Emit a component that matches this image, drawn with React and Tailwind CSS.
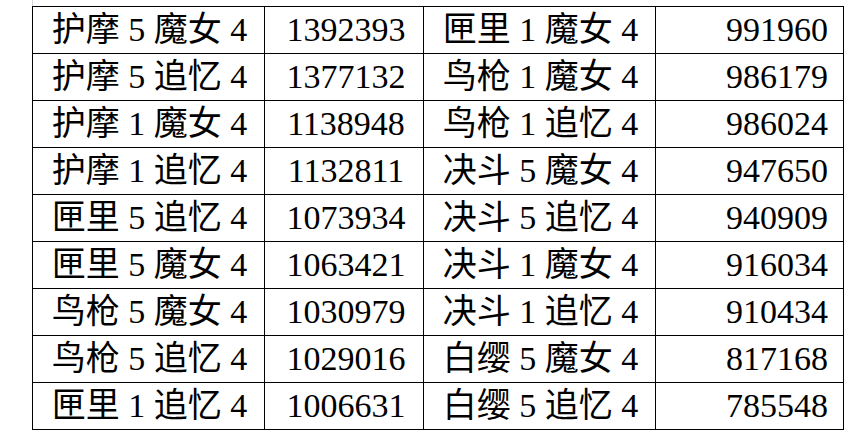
import React from 'react';

const rows = [
  ['护摩 5 魔女 4', '1392393', '匣里 1 魔女 4', '991960'],
  ['护摩 5 追忆 4', '1377132', '鸟枪 1 魔女 4', '986179'],
  ['护摩 1 魔女 4', '1138948', '鸟枪 1 追忆 4', '986024'],
  ['护摩 1 追忆 4', '1132811', '决斗 5 魔女 4', '947650'],
  ['匣里 5 追忆 4', '1073934', '决斗 5 追忆 4', '940909'],
  ['匣里 5 魔女 4', '1063421', '决斗 1 魔女 4', '916034'],
  ['鸟枪 5 魔女 4', '1030979', '决斗 1 追忆 4', '910434'],
  ['鸟枪 5 追忆 4', '1029016', '白缨 5 魔女 4', '817168'],
  ['匣里 1 追忆 4', '1006631', '白缨 5 追忆 4', '785548'],
];

export default function App() {
  return (
    <div className="w-[863px] h-[438px] bg-white overflow-hidden relative">
      {/* faint sheet gridline */}
      <div className="absolute left-[32px] top-0 h-[6px] w-px bg-gray-300" />
      <div className="ml-[32px] mt-[6px] w-fit grid grid-cols-[232px_159px_232px_188px] border-l border-t border-black text-[34px] leading-none text-black font-['Liberation_Serif','Noto_Sans_CJK_SC',serif]">
        {rows.map((r, i) => (
          <React.Fragment key={i}>
            <div className="h-[47px] border-r border-b border-black flex items-center justify-center pl-[2px]">{r[0]}</div>
            <div className="h-[47px] border-r border-b border-black flex items-center justify-center pl-[4px]">{r[1]}</div>
            <div className="h-[47px] border-r border-b border-black flex items-center justify-center pl-[2px]">{r[2]}</div>
            <div className="h-[47px] border-r border-b border-black flex items-center justify-end pr-[15px]">{r[3]}</div>
          </React.Fragment>
        ))}
      </div>
    </div>
  );
}
